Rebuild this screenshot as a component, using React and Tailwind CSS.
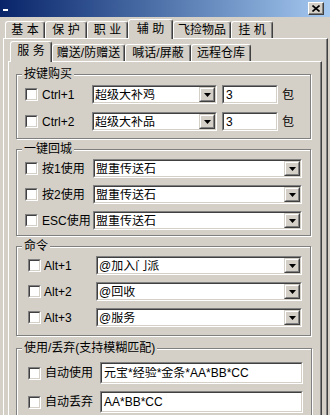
import React from "react";

// Classic Win9x-style settings dialog — 辅助 / 服务 page

const FONT = "font-['Liberation_Sans','Noto_Sans_CJK_SC',sans-serif]";

function Sunken({ className = "", children }) {
  return (
    <div className={`border border-t-[#808080] border-l-[#808080] border-b-white border-r-white ${className}`}>
      <div className="h-full border border-t-[#404040] border-l-[#404040] border-b-[#d4d0c8] border-r-[#d4d0c8] bg-white flex items-center">
        {children}
      </div>
    </div>
  );
}

function Checkbox() {
  return (
    <div className="w-[13px] h-[13px] shrink-0 border border-t-[#808080] border-l-[#808080] border-b-white border-r-white">
      <div className="w-full h-full border border-t-[#404040] border-l-[#404040] border-b-[#d4d0c8] border-r-[#d4d0c8] bg-white" />
    </div>
  );
}

function ArrowButton() {
  return (
    <div className="w-[16px] h-full shrink-0 border border-t-[#d4d0c8] border-l-[#d4d0c8] border-b-[#404040] border-r-[#404040]">
      <div className="w-full h-full border border-t-white border-l-white border-b-[#808080] border-r-[#808080] bg-[#d4d0c8] flex items-center justify-center">
        <svg width="7" height="4" viewBox="0 0 7 4">
          <path d="M0 0h7L3.5 4z" fill="#000" />
        </svg>
      </div>
    </div>
  );
}

function Combo({ value, className }) {
  return (
    <Sunken className={`h-[19px] ${className}`}>
      <span className="flex-1 pl-[1px] text-[12px] leading-none text-black whitespace-nowrap overflow-hidden">{value}</span>
      <ArrowButton />
    </Sunken>
  );
}

function Field({ value, className, h = "h-[19px]" }) {
  return (
    <Sunken className={`${h} ${className}`}>
      <span className="pl-[2px] text-[12px] leading-none text-black whitespace-nowrap overflow-hidden">{value}</span>
    </Sunken>
  );
}

function Group({ title, className = "", children }) {
  return (
    <fieldset className={`mx-[7px] w-[295px] border border-[#808080] shadow-[inset_1px_1px_0_#fff,1px_1px_0_#fff] px-[8px] ${className}`}>
      <legend className="-ml-[3px] px-[2px] bg-[#d4d0c8] text-[12px] leading-[14px] text-black">{title}</legend>
      {children}
    </fieldset>
  );
}

function Tab({ label, width, active, tall }) {
  return (
    <div
      className={`flex items-center justify-center shrink-0 border-t border-l border-white border-r border-r-[#404040] rounded-t-[3px] shadow-[inset_-1px_0_0_#808080] bg-[#d4d0c8] text-[12px] leading-none text-black whitespace-nowrap
        ${active ? `relative z-10 -mb-px ${tall} pb-[2px]` : "h-[17px]"}`}
      style={{ width }}
    >
      {label}
    </div>
  );
}

export default function App() {
  const topTabs = [
    { label: "基 本", w: 40 },
    { label: "保 护", w: 42 },
    { label: "职 业", w: 41 },
    { label: "辅 助", w: 45, active: true },
    { label: "飞捡物品", w: 58 },
    { label: "挂 机", w: 42 },
  ];
  const subTabs = [
    { label: "服 务", w: 42, active: true },
    { label: "赠送/防赠送", w: 73 },
    { label: "喊话/屏蔽", w: 66 },
    { label: "远程仓库", w: 60 },
  ];

  return (
    <div className={`w-[330px] h-[415px] overflow-hidden bg-[#d4d0c8] ${FONT}`}>
      {/* 标题栏 */}
      <div className="h-[17px] bg-gradient-to-r from-[#0a246a] to-[#a6caf0] flex items-center justify-between pl-[3px] pr-[6px]">
        <div className="w-[5px] h-[2px] bg-white mt-[3px]" />
        <div className="w-[16px] h-[13px] border border-t-white border-l-white border-b-[#404040] border-r-[#404040] bg-[#d4d0c8] flex items-center justify-center shadow-[inset_-1px_-1px_0_#808080]">
          <svg width="8" height="7" viewBox="0 0 8 7">
            <path d="M0.5 0.5l7 6M7.5 0.5l-7 6" stroke="#000" strokeWidth="1.6" />
          </svg>
        </div>
      </div>

      <div className="ml-[3px] w-[325px]">
        {/* 主标签 */}
        <div className="h-[21px] flex items-end pl-[2px]">
          {topTabs.map((t) => (
            <Tab key={t.label} label={t.label} width={t.w} active={t.active} tall="h-[20px]" />
          ))}
        </div>

        {/* 外层面板 */}
        <div className="h-[400px] border-t border-l border-white border-r border-r-[#404040] shadow-[inset_-1px_0_0_#808080]">
          <div className="h-[22px] flex items-end pl-[6px]">
            {subTabs.map((t) => (
              <Tab key={t.label} label={t.label} width={t.w} active={t.active} tall="h-[21px]" />
            ))}
          </div>

          {/* 内层面板 */}
          <div className="ml-[4px] w-[314px] h-[400px] border-t border-l border-white border-r border-r-[#404040] shadow-[inset_-1px_0_0_#808080] pt-[5px] text-[12px] text-black">
            <Group title="按键购买" className="pb-[7px]">
              {[
                ["Ctrl+1", "超级大补鸡"],
                ["Ctrl+2", "超级大补品"],
              ].map(([k, v], i) => (
                <div key={k} className={`flex items-center h-[19px] ${i ? "mt-[8px]" : "mt-[4px]"}`}>
                  <Checkbox />
                  <span className="ml-[4px] w-[50px] shrink-0">{k}</span>
                  <Combo value={v} className="w-[125px]" />
                  <Field value="3" className="ml-[5px] w-[56px]" />
                  <span className="ml-[4px]">包</span>
                </div>
              ))}
            </Group>

            <Group title="一键回城" className="mt-[3px] pb-[5px]">
              {["按1使用", "按2使用", "ESC使用"].map((k, i) => (
                <div key={k} className={`flex items-center h-[19px] ${i ? "mt-[7px]" : "mt-[3px]"}`}>
                  <Checkbox />
                  <span className="ml-[4px] w-[51px] shrink-0">{k}</span>
                  <Combo value="盟重传送石" className="w-[209px]" />
                </div>
              ))}
            </Group>

            <Group title="命令" className="mt-[3px] pb-[8px]">
              {[
                ["Alt+1", "@加入门派"],
                ["Alt+2", "@回收"],
                ["Alt+3", "@服务"],
              ].map(([k, v], i) => (
                <div key={k} className={`flex items-center h-[19px] pl-[3px] ${i ? "mt-[7px]" : "mt-[3px]"}`}>
                  <Checkbox />
                  <span className="ml-[3px] w-[52px] shrink-0">{k}</span>
                  <Combo value={v} className="w-[206px]" />
                </div>
              ))}
            </Group>

            <Group title="使用/丢弃(支持模糊匹配)" className="mt-[5px] pb-[8px]">
              {[
                ["自动使用", "元宝*经验*金条*AA*BB*CC"],
                ["自动丢弃", "AA*BB*CC"],
              ].map(([k, v], i) => (
                <div key={k} className={`flex items-center h-[22px] pl-[3px] ${i ? "mt-[7px]" : "mt-[7px]"}`}>
                  <Checkbox />
                  <span className="ml-[4px] w-[55px] shrink-0">{k}</span>
                  <Field value={v} className="w-[203px]" h="h-[22px]" />
                </div>
              ))}
            </Group>
          </div>
        </div>
      </div>
    </div>
  );
}
